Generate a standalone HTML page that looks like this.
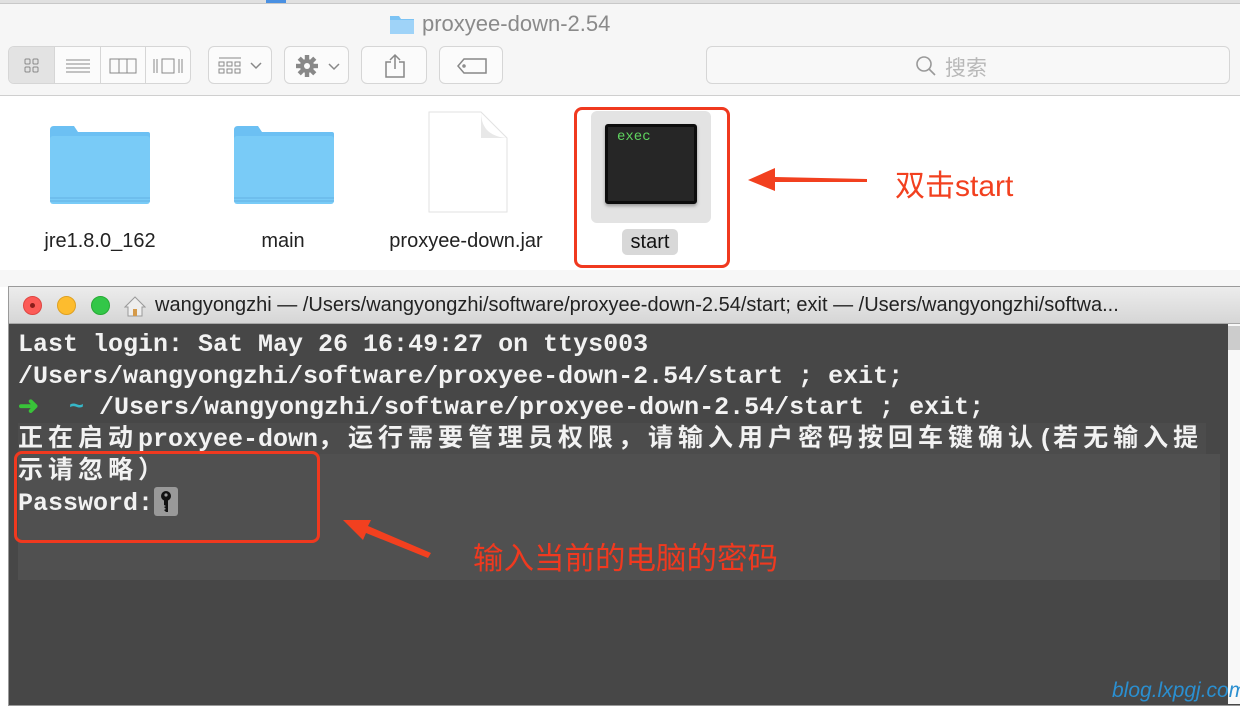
<!DOCTYPE html>
<html><head><meta charset="utf-8"><style>
*{margin:0;padding:0;box-sizing:border-box}
body{width:1240px;height:704px;overflow:hidden;background:#fff;position:relative;font-family:"Liberation Sans","Noto Sans CJK SC",sans-serif}
.a{position:absolute}
.btn{position:absolute;top:46px;height:38px;border:1px solid #d6d6d6;border-radius:6px;background:#fbfbfb}
.term{font-family:"Liberation Mono","Noto Sans CJK SC",monospace;font-weight:bold;font-size:25px;color:#f2f2f2;white-space:pre;line-height:31.7px}
.c{letter-spacing:5px}
.lbl{position:absolute;font-size:20px;color:#222;text-align:center}
</style></head><body>
<div class="a" style="left:0;top:0;width:1240px;height:96px;background:#f6f6f6;border-bottom:1px solid #cfcfcf"></div>
<div class="a" style="left:0;top:0;width:1240px;height:4px;background:#e0e0e0;border-bottom:1px solid #c8c8c8"></div>
<div class="a" style="left:266px;top:0;width:20px;height:3px;background:#4a90e2"></div>
<svg class="a" style="left:389px;top:13px" width="26" height="22"><path d="M1 3h9l2 3h13v15H1z" fill="#7cc3f4"/><rect x="1" y="7" width="24" height="14" fill="#9fd3f8"/></svg>
<div class="a" style="left:422px;top:11px;font-size:22px;color:#8a8a8a">proxyee-down-2.54</div>
<div class="btn" style="left:8px;width:183px;overflow:hidden">
<div class="a" style="left:0;top:0;width:46px;height:38px;background:#e3e3e3"></div>
<div class="a" style="left:45px;top:0;width:1px;height:38px;background:#d6d6d6"></div>
<div class="a" style="left:91px;top:0;width:1px;height:38px;background:#d6d6d6"></div>
<div class="a" style="left:136px;top:0;width:1px;height:38px;background:#d6d6d6"></div>
<svg class="a" style="left:14px;top:10px" width="18" height="18" fill="none" stroke="#888"><rect x="2" y="2" width="5" height="5" rx="1"/><rect x="10" y="2" width="5" height="5" rx="1"/><rect x="2" y="10" width="5" height="5" rx="1"/><rect x="10" y="10" width="5" height="5" rx="1"/></svg>
<svg class="a" style="left:56px;top:10px" width="26" height="18" stroke="#888"><path d="M1 3h24M1 7h24M1 11h24M1 15h24"/></svg>
<svg class="a" style="left:100px;top:10px" width="28" height="18" fill="none" stroke="#888"><rect x="1" y="2" width="26" height="14"/><path d="M10 2v14M18 2v14"/></svg>
<svg class="a" style="left:142px;top:10px" width="34" height="18" fill="none" stroke="#888"><rect x="11" y="2" width="12" height="14"/><path d="M3 2v14M6 2v14M28 2v14M31 2v14"/></svg>
</div>
<div class="btn" style="left:208px;width:64px"><svg class="a" style="left:9px;top:9px" width="46" height="20" fill="none" stroke="#888"><path d="M1 2h22"/><rect x="1" y="6" width="5" height="4"/><rect x="9" y="6" width="5" height="4"/><rect x="17" y="6" width="5" height="4"/><rect x="1" y="13" width="5" height="4"/><rect x="9" y="13" width="5" height="4"/><rect x="17" y="13" width="5" height="4"/><path d="M33 7l5 5 5-5" stroke-width="1.5"/></svg></div>
<div class="btn" style="left:284px;width:65px"><svg class="a" style="left:10px;top:8px" width="48" height="22"><g fill="#888" transform="translate(12 11)"><circle r="7"/><g id="t"><rect x="-2.2" y="-11" width="4.4" height="22"/></g><use href="#t" transform="rotate(45)"/><use href="#t" transform="rotate(90)"/><use href="#t" transform="rotate(135)"/></g><circle cx="12" cy="11" r="3" fill="#fbfbfb"/><path d="M34 9l5 5 5-5" stroke="#888" stroke-width="1.5" fill="none"/></svg></div>
<div class="btn" style="left:361px;width:66px"><svg class="a" style="left:22px;top:6px" width="22" height="26" fill="none" stroke="#888" stroke-width="1.5"><path d="M7 9H2v15h18V9h-5M11 2v14M6 7l5-5 5 5"/></svg></div>
<div class="btn" style="left:439px;width:64px"><svg class="a" style="left:16px;top:10px" width="32" height="18" fill="none" stroke="#888" stroke-width="1.5"><path d="M8 2h22v14H8L2 9z"/><circle cx="8" cy="9" r="1"/></svg></div>
<div class="btn" style="left:706px;width:524px;background:#f8f8f8"><svg class="a" style="left:208px;top:8px" width="22" height="22" fill="none" stroke="#999" stroke-width="1.6"><circle cx="9" cy="9" r="7"/><path d="M14 14l6 6"/></svg><div class="a" style="left:238px;top:5px;font-size:21px;color:#b8b8b8">搜索</div></div>
<svg class="a" style="left:48px;top:124px" width="104" height="84"><path d="M2 6q0-4 4-4h20l4 6h70q2 0 2 2v62H2z" fill="#6cc0f3"/><rect x="2" y="12" width="100" height="68" rx="3" fill="#79cbf7"/><path d="M2 74h100M2 77h100" stroke="#62b2e3"/></svg>
<div class="lbl" style="left:30px;top:230px;width:140px">jre1.8.0_162</div>
<svg class="a" style="left:232px;top:124px" width="104" height="84"><path d="M2 6q0-4 4-4h20l4 6h70q2 0 2 2v62H2z" fill="#6cc0f3"/><rect x="2" y="12" width="100" height="68" rx="3" fill="#79cbf7"/><path d="M2 74h100M2 77h100" stroke="#62b2e3"/></svg>
<div class="lbl" style="left:213px;top:230px;width:140px">main</div>
<svg class="a" style="left:427px;top:110px" width="82" height="104"><path d="M2 2h52l26 26v74H2z" fill="#fff" stroke="#e2e2e2"/><path d="M54 2q0 24 26 26L54 28z" fill="#e8e8e8"/></svg>
<div class="lbl" style="left:374px;top:230px;width:184px">proxyee-down.jar</div>
<div class="a" style="left:591px;top:111px;width:120px;height:112px;background:#e3e3e3;border-radius:6px"></div>
<div class="a" style="left:605px;top:124px;width:92px;height:80px;background:#262626;border:3px solid #0d0d0d;border-radius:3px;box-shadow:0 2px 3px #999"></div>
<div class="a" style="left:617px;top:129px;font-family:'Liberation Mono',monospace;font-size:14px;color:#5fd55f">exec</div>
<div class="a" style="left:622px;top:229px;width:56px;height:26px;background:#d8d8d8;border-radius:5px;font-size:20px;text-align:center;line-height:26px;color:#111">start</div>
<div class="a" style="left:574px;top:107px;width:156px;height:161px;border:3px solid #f0391f;border-radius:8px"></div>
<svg class="a" style="left:745px;top:163px" width="125" height="34"><path d="M122 16L30 14L30 5L3 17L30 28L30 19L122 19z" fill="#f2401f"/></svg>
<div class="a" style="left:895px;top:161px;font-size:30px;color:#f2401f">双击start</div>
<div class="a" style="left:0;top:270px;width:1240px;height:17px;background:#f7f7f7"></div>
<div class="a" style="left:8px;top:286px;width:1240px;height:420px;background:#474747;border:1px solid #9a9a9a"></div>
<div class="a" style="left:9px;top:287px;width:1240px;height:37px;background:linear-gradient(#ececec,#d6d6d6);border-bottom:1px solid #a8a8a8"></div>
<div class="a" style="left:23px;top:296px;width:19px;height:19px;border-radius:50%;background:#fc5b57;border:1px solid #de4642"></div>
<div class="a" style="left:30px;top:303px;width:5px;height:5px;border-radius:50%;background:#8a1e1b"></div>
<div class="a" style="left:57px;top:296px;width:19px;height:19px;border-radius:50%;background:#fdbc2e;border:1px solid #dea123"></div>
<div class="a" style="left:91px;top:296px;width:19px;height:19px;border-radius:50%;background:#33c748;border:1px solid #27aa35"></div>
<svg class="a" style="left:124px;top:295px" width="22" height="22"><path d="M11 2L1 12h3v9h14v-9h3z" fill="#eee" stroke="#999"/><rect x="9" y="14" width="4" height="7" fill="#d49a4a"/></svg>
<div class="a" style="left:155px;top:294px;font-size:20px;color:#222;white-space:nowrap">wangyongzhi — /Users/wangyongzhi/software/proxyee-down-2.54/start; exit — /Users/wangyongzhi/softwa...</div>
<div class="a" style="left:1228px;top:324px;width:12px;height:380px;background:#f8f8f8"></div>
<div class="a" style="left:1228px;top:326px;width:12px;height:24px;background:#ccc"></div>
<div class="a" style="left:18px;top:423px;width:1188px;height:31px;background:#4c4c4c"></div>
<div class="a" style="left:18px;top:454px;width:1202px;height:126px;background:#505050"></div>
<div class="a term" style="left:18px;top:329px">Last login: Sat May 26 16:49:27 on ttys003
/Users/wangyongzhi/software/proxyee-down-2.54/start ; exit;
<span style="color:#39c339">➜</span>  <span style="color:#36b7c8">~</span> /Users/wangyongzhi/software/proxyee-down-2.54/start ; exit;
<span class="c">正在启动</span>proxyee-down<span class="c">，运行需要管理员权限，请输入用户密码按回车键确认</span>(<span class="c">若无输入提</span>
<span class="c">示请忽略）</span>
Password:</div>
<div class="a" style="left:154px;top:487px;width:24px;height:29px;background:#999;border-radius:3px"></div>
<svg class="a" style="left:157px;top:489px" width="18" height="25"><circle cx="9" cy="7" r="5" fill="#111"/><circle cx="9" cy="6" r="1.6" fill="#999"/><path d="M7 11h4v12H9l-2-2 2-1-2-2 2-1-2-1z" fill="#111"/></svg>
<div class="a" style="left:14px;top:451px;width:306px;height:92px;border:3px solid #f0391f;border-radius:8px"></div>
<svg class="a" style="left:338px;top:508px" width="96" height="50"><path d="M93 45L30 18L33 12L5 12L25 32L28 25L90 50z" fill="#f2401f"/></svg>
<div class="a" style="left:473px;top:534px;font-size:30.5px;color:#f0391f;white-space:nowrap">输入当前的电脑的密码</div>
<div class="a" style="left:1112px;top:679px;font-size:21px;font-style:italic;color:#2a8fd0">blog.lxpgj.com</div>
</body></html>
